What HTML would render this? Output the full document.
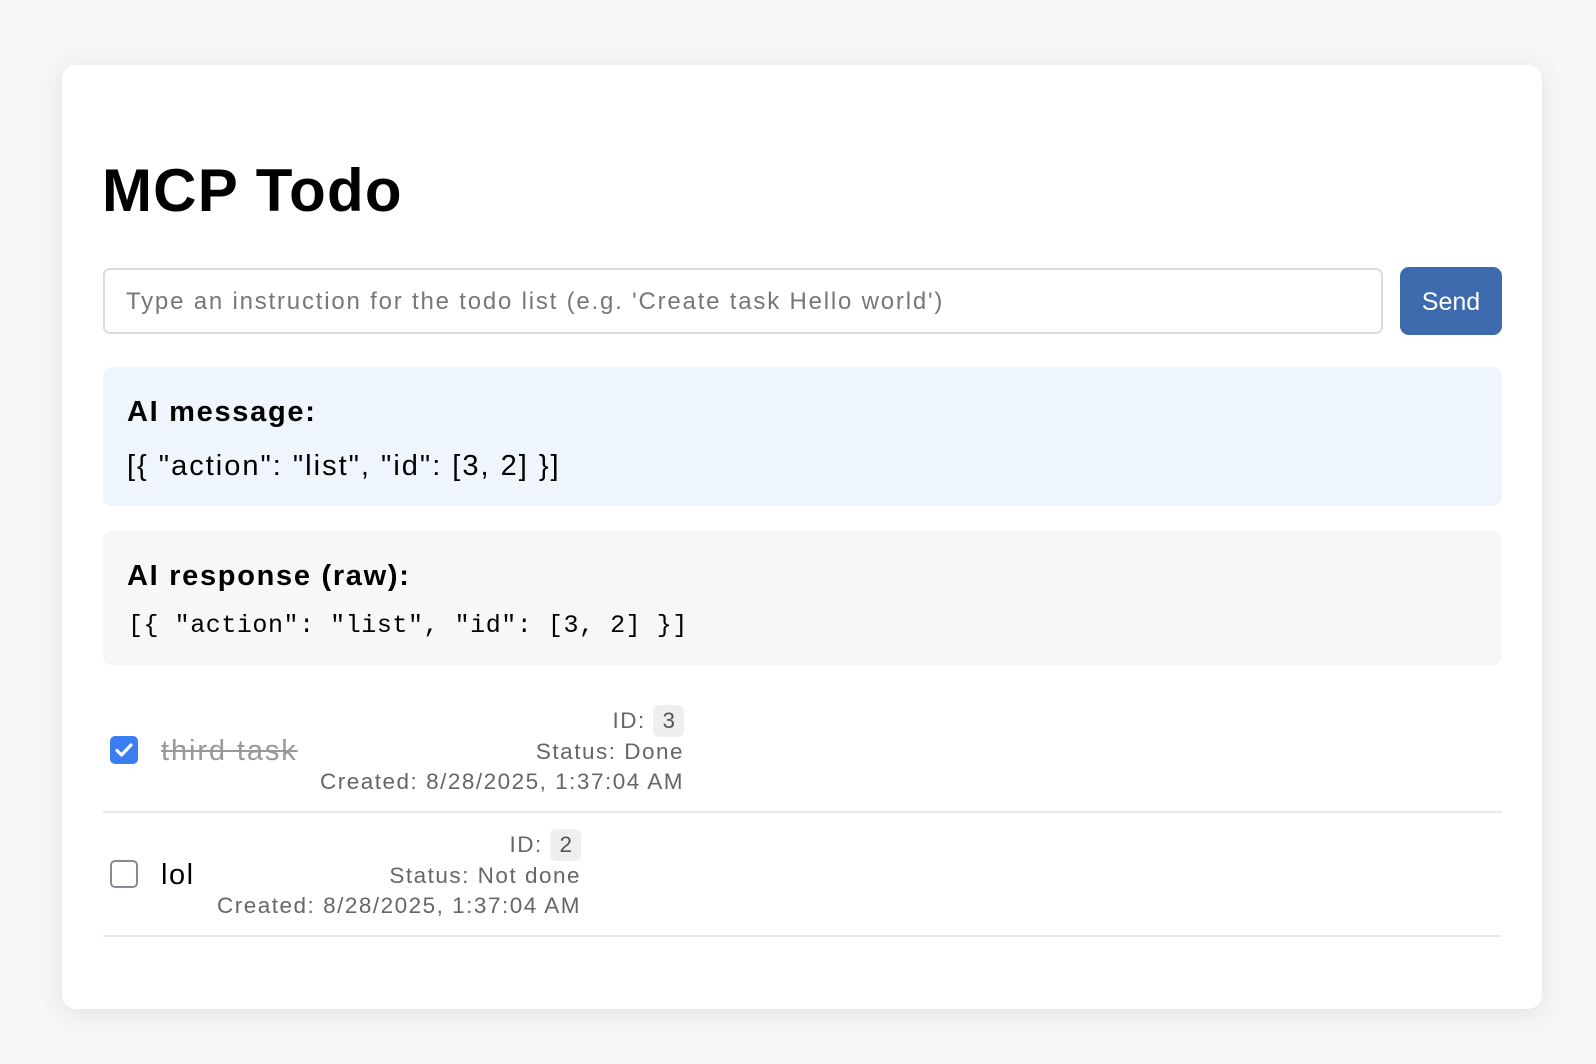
<!DOCTYPE html>
<html><head><meta charset="utf-8"><style>
*{box-sizing:border-box;margin:0;padding:0}
body{width:1596px;height:1064px;background:#f6f6f6;font-family:"Liberation Sans",sans-serif;position:relative;overflow:hidden}
.card{position:absolute;left:62px;top:65px;width:1480px;height:944px;background:#fff;border-radius:14px;box-shadow:0 4px 24px rgba(0,0,0,.08)}
.a{position:absolute;white-space:nowrap}
h1{position:absolute;left:102px;top:151px;font-size:60px;font-weight:bold;color:#000;line-height:80px;letter-spacing:1.2px}
.input{position:absolute;left:103px;top:268px;width:1280px;height:66px;border:2px solid #dcdcdc;border-radius:7px;font-size:24px;color:#777;padding-left:21px;line-height:64px;letter-spacing:1.8px}
.btn{position:absolute;left:1400px;top:267px;width:102px;height:68px;background:#3e6bad;border-radius:9px;color:#fff;font-size:25px;text-align:center;line-height:70px}
.box{position:absolute;left:103px;width:1399px;border-radius:9px}
.h{font-weight:bold;font-size:29px;color:#000;letter-spacing:1.7px}
.meta{position:absolute;text-align:right;font-size:22.5px;color:#666;line-height:30px;letter-spacing:1.5px}
.badge{display:inline-block;background:#efefef;border-radius:6px;padding:0 9px;line-height:32px;color:#555;letter-spacing:0}
.line{position:absolute;left:103px;width:1399px;height:2px;background:#ebebeb}
.cb{position:absolute;width:28px;height:28px;border-radius:5px}
</style></head><body>
<div class="card"></div>
<h1>MCP Todo</h1>
<div class="input">Type an instruction for the todo list (e.g. 'Create task Hello world')</div>
<div class="btn">Send</div>
<div class="box" style="top:367px;height:139px;background:#eef5fd"></div>
<div class="a h" style="left:127px;top:396px;">AI message:</div>
<div class="a" style="left:127px;top:450px;font-size:29px;color:#000;letter-spacing:2px">[{ "action": "list", "id": [3, 2] }]</div>
<div class="box" style="top:531px;height:134px;background:#f6f7f9"></div>
<div class="a h" style="left:127px;top:560px;">AI response (raw):</div>
<div class="a" style="left:128px;top:611px;font-size:25px;font-family:'Liberation Mono',monospace;color:#000;letter-spacing:0.55px">[{ "action": "list", "id": [3, 2] }]</div>

<div class="cb" style="left:110px;top:736px;background:#3b7cf0"><svg width="28" height="28" viewBox="0 0 28 28"><path d="M7 14.5l4.5 4.5L21 9" stroke="#fff" stroke-width="3.2" fill="none" stroke-linecap="round" stroke-linejoin="round"/></svg></div>
<div class="a" style="left:161px;top:735px;font-size:29px;color:#999;text-decoration:line-through;letter-spacing:1.9px">third task</div>
<div class="meta" style="right:912px;top:705px">ID: <span class="badge">3</span><br>Status: Done<br>Created: 8/28/2025, 1:37:04 AM</div>
<div class="line" style="top:811px"></div>

<div class="cb" style="left:110px;top:860px;border:2px solid #8a8a96;background:#fff"></div>
<div class="a" style="left:161px;top:859px;font-size:29px;color:#000;letter-spacing:1.5px">lol</div>
<div class="meta" style="right:1015px;top:829px">ID: <span class="badge">2</span><br>Status: Not done<br>Created: 8/28/2025, 1:37:04 AM</div>
<div class="line" style="top:935px"></div>
</body></html>
